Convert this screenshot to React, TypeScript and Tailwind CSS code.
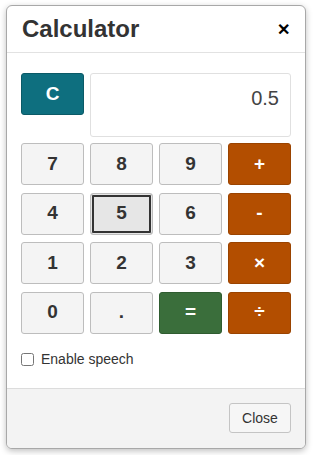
import React, { useState } from "react";

const keys: { label: string; kind: "num" | "op" | "eq" | "focus" }[] = [
    { label: "7", kind: "num" },
    { label: "8", kind: "num" },
    { label: "9", kind: "num" },
    { label: "+", kind: "op" },
    { label: "4", kind: "num" },
    { label: "5", kind: "focus" },
    { label: "6", kind: "num" },
    { label: "-", kind: "op" },
    { label: "1", kind: "num" },
    { label: "2", kind: "num" },
    { label: "3", kind: "num" },
    { label: "×", kind: "op" },
    { label: "0", kind: "num" },
    { label: ".", kind: "num" },
    { label: "=", kind: "eq" },
    { label: "÷", kind: "op" },
];

const kindClass = {
    num: "bg-[#f4f4f4] border-[#bdbdbd] text-[#333]",
    focus: "bg-[#e6e6e6] border-[#bdbdbd] text-[#333] shadow-[inset_0_0_0_1px_#e6e6e6,inset_0_0_0_3px_#333]",
    op: "bg-[#b34e00] border-[#9a4300] text-white",
    eq: "bg-[#3a6e3b] border-[#2f5c30] text-white",
};

const App: React.FC = () => {
    const [speech, setSpeech] = useState(false);

    return (
        <div className="min-h-[455px] bg-white pl-[6px] pt-[5px] font-['Liberation_Sans',Arial,sans-serif]">
            <div className="w-[300px] overflow-hidden rounded-[6px] border border-[#a8a8a8] bg-white shadow-[0_2px_6px_rgba(0,0,0,0.25)]">
                {/* Header */}
                <div className="flex h-[47px] items-center justify-between border-b border-[#e2e2e2] pl-[15px] pr-[15px]">
                    <h1 className="text-[24px] font-bold leading-none text-[#333]">Calculator</h1>
                    <button className="mt-[1px] text-[16px] font-bold leading-none text-black">✕</button>
                </div>

                {/* Body */}
                <div className="px-[14px] pb-[18px] pt-[20px]">
                    <div className="flex gap-[6px]">
                        <button className="h-[42px] w-[63px] rounded-[3px] border border-[#0b5a67] bg-[#0e6f7f] text-[19px] font-bold text-white">
                            C
                        </button>
                        <div className="flex h-[64px] flex-1 items-start justify-end rounded-[3px] border border-[#e0e0e0] bg-white pr-[11px] pt-[9px] text-[20px] text-[#444]">
                            0.5
                        </div>
                    </div>

                    <div className="mt-[6px] grid grid-cols-4 gap-x-[6px] gap-y-[7.5px]">
                        {keys.map((k) => (
                            <button
                                key={k.label}
                                className={`flex h-[42px] items-center justify-center rounded-[3px] border text-[19px] font-bold ${kindClass[k.kind]}`}
                            >
                                {k.label}
                            </button>
                        ))}
                    </div>

                    <label className="mt-[15px] flex items-center gap-[7px] text-[14px] text-[#333]">
                        <input
                            type="checkbox"
                            checked={speech}
                            onChange={(e) => setSpeech(e.target.checked)}
                            className="m-0 h-[13px] w-[13px]"
                        />
                        Enable speech
                    </label>
                </div>

                {/* Footer */}
                <div className="flex h-[60px] items-center justify-end border-t border-[#dcdcdc] bg-[#f3f3f3] pr-[14px]">
                    <button className="h-[30px] w-[62px] rounded-[3px] border border-[#c4c4c4] bg-[#f6f6f6] text-[14px] text-[#333]">
                        Close
                    </button>
                </div>
            </div>
        </div>
    );
};

export default App;
